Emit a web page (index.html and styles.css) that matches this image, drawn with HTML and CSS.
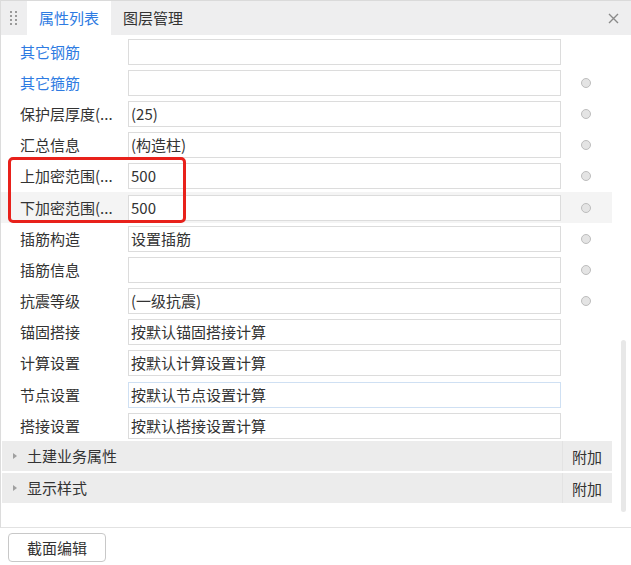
FILE: index.html
```html
<!DOCTYPE html>
<html lang="zh-CN">
<head>
<meta charset="utf-8">
<title>属性列表</title>
<link rel="stylesheet" href="styles.css">
</head>
<body>
<div class="page">
  <div class="panel">
    <div class="tabbar">
      <div class="grip">
        <svg width="8" height="15" viewBox="0 0 8 15">
          <g fill="#9a9a9a">
            <rect x="0" y="0" width="2" height="2"/><rect x="5" y="0" width="2" height="2"/>
            <rect x="0" y="4" width="2" height="2"/><rect x="5" y="4" width="2" height="2"/>
            <rect x="0" y="8" width="2" height="2"/><rect x="5" y="8" width="2" height="2"/>
            <rect x="0" y="12" width="2" height="2"/><rect x="5" y="12" width="2" height="2"/>
          </g>
        </svg>
      </div>
      <div class="tab active">属性列表</div>
      <div class="tab">图层管理</div>
      <div class="spacer"></div>
      <div class="close">
        <svg width="11" height="11" viewBox="0 0 11 11"><path d="M1 1L10 10M10 1L1 10" stroke="#8a8a8a" stroke-width="1.4" fill="none"/></svg>
      </div>
    </div>
    <div class="body">
      <div class="list">
        <div class="row"><div class="label blue">其它钢筋</div><div class="input"></div><div class="opt"></div></div>
        <div class="row"><div class="label blue">其它箍筋</div><div class="input"></div><div class="opt"><span class="radio"></span></div></div>
        <div class="row"><div class="label">保护层厚度(...</div><div class="input">(25)</div><div class="opt"><span class="radio"></span></div></div>
        <div class="row"><div class="label">汇总信息</div><div class="input">(构造柱)</div><div class="opt"><span class="radio"></span></div></div>
        <div class="row"><div class="label">上加密范围(...</div><div class="input">500</div><div class="opt"><span class="radio"></span></div></div>
        <div class="row hover"><div class="label">下加密范围(...</div><div class="input">500</div><div class="opt"><span class="radio"></span></div></div>
        <div class="row"><div class="label">插筋构造</div><div class="input">设置插筋</div><div class="opt"><span class="radio"></span></div></div>
        <div class="row"><div class="label">插筋信息</div><div class="input"></div><div class="opt"><span class="radio"></span></div></div>
        <div class="row"><div class="label">抗震等级</div><div class="input">(一级抗震)</div><div class="opt"><span class="radio"></span></div></div>
        <div class="row"><div class="label">锚固搭接</div><div class="input">按默认锚固搭接计算</div><div class="opt"></div></div>
        <div class="row"><div class="label">计算设置</div><div class="input">按默认计算设置计算</div><div class="opt"></div></div>
        <div class="row"><div class="label">节点设置</div><div class="input focus">按默认节点设置计算</div><div class="opt"></div></div>
        <div class="row"><div class="label">搭接设置</div><div class="input">按默认搭接设置计算</div><div class="opt"></div></div>
        <div class="section"><span class="tri"></span><span class="sec-name">土建业务属性</span><span class="sec-extra">附加</span></div>
        <div class="section"><span class="tri"></span><span class="sec-name">显示样式</span><span class="sec-extra">附加</span></div>
      </div>
      <div class="scrolltrack"><div class="thumb"></div></div>
    </div>
  </div>
  <div class="footer"><button class="btn">截面编辑</button></div>
  <div class="annot"></div>
</div>
</body>
</html>
```
FILE: styles.css
```css
* { box-sizing: border-box; }
html, body { margin: 0; padding: 0; background: #fff; }
body {
  font-family: "Noto Sans CJK SC", "Microsoft YaHei", "Noto Sans", sans-serif;
  font-size: 15px;
  color: #333;
}
.page { position: relative; width: 631px; height: 565px; overflow: hidden; }
.panel {
  height: 528px;
  border-left: 1px solid #dcdcdc;
  border-bottom: 1px solid #e2e2e2;
  display: flex;
  flex-direction: column;
}
.tabbar {
  height: 35px;
  flex: none;
  display: flex;
  align-items: stretch;
  background: #eeeeef;
  border-top: 1px solid #dadada;
}
.grip { width: 26px; display: flex; align-items: center; justify-content: center; padding-right: 1px; }
.tab {
  padding: 0 12px;
  display: flex;
  align-items: center;
  line-height: 20px;
  color: #333;
}
.tab.active { background: #fff; color: #2e7be2; }
.spacer { flex: 1; }
.close { width: 36px; display: flex; align-items: center; justify-content: center; padding-left: 1px; }
.body { flex: 1; display: flex; min-height: 0; }
.list { width: 611px; padding-top: 1px; }
.row { height: 31.2px; display: flex; align-items: center; }
.row.hover { background: #f4f4f4; }
.label {
  width: 127px;
  padding-left: 19px;
  white-space: nowrap;
  overflow: hidden;
  line-height: 20px;
}
.label.blue { color: #2e7be2; }
.input {
  width: 433px;
  height: 26px;
  border: 1px solid #dcdcdc;
  background: #fff;
  padding-left: 2px;
  line-height: 23px;
  white-space: nowrap;
}
.input.focus { border-color: #cfe0f3; }
.opt { flex: 1; display: flex; justify-content: center; align-items: center; padding-right: 1px; }
.radio {
  width: 10px; height: 10px;
  border-radius: 50%;
  border: 1px solid #bdbdbd;
  background: #e4e4e4;
}
.section {
  height: 30px;
  background: #ececec;
  display: flex;
  align-items: center;
  margin-left: 1px;
}
.section + .section { margin-top: 2px; }
.tri {
  width: 0; height: 0;
  margin-left: 11px;
  border-left: 4px solid #a0a0a0;
  border-top: 3.5px solid transparent;
  border-bottom: 3.5px solid transparent;
}
.sec-name { flex: 1; padding-left: 10px; line-height: 20px; }
.sec-extra {
  width: 50px;
  height: 100%;
  border-left: 1px solid #e3e3e3;
  display: flex;
  align-items: center;
  padding-left: 9px;
}
.scrolltrack { flex: 1; }
.thumb {
  margin-top: 305px;
  margin-left: 9px;
  width: 5px;
  height: 172px;
  background: #e8e8e8;
  border-radius: 3px;
}
.footer { padding: 5px 0 0 8px; }
.btn {
  width: 98px;
  height: 29px;
  border: 1px solid #c8c8c8;
  border-radius: 4px;
  background: #fff;
  font-family: inherit;
  font-size: 15px;
  color: #333;
  padding: 0;
  line-height: 20px;
}
.annot {
  position: absolute;
  left: 8px;
  top: 157px;
  width: 178px;
  height: 66px;
  border: 3px solid #e8211b;
  border-radius: 5px;
}
```
